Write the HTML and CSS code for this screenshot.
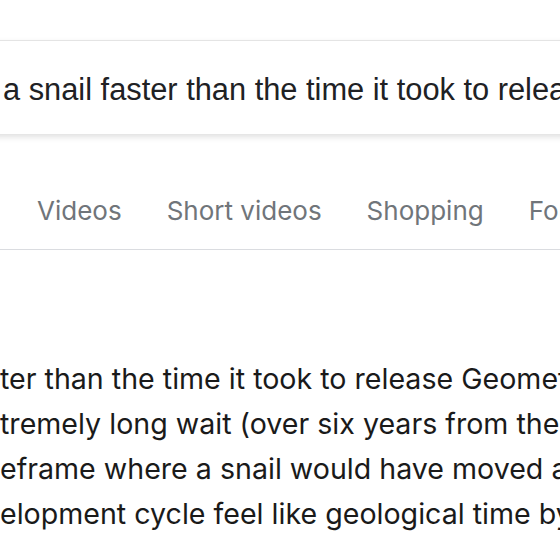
FILE: index.html
```html
<!DOCTYPE html>
<html lang="en">
<head>
<meta charset="utf-8">
<link rel="stylesheet" href="styles.css">
</head>
<body>
<div class="page">
  <header class="header">
    <div class="searchbox">
      <span class="query">a snail faster than the time it took to release Geometry Dash 2.2</span>
    </div>
  </header>
  <nav class="tabs">
    <span class="tab tab-first">Videos</span>
    <span class="tab">Short videos</span>
    <span class="tab">Shopping</span>
    <span class="tab">Forums</span>
  </nav>
  <main class="answer">
    <p class="line">ter than the time it took to release Geometry Dash 2.2</p>
    <p class="line">tremely long wait (over six years from the previous update)</p>
    <p class="line">eframe where a snail would have moved across a great distance</p>
    <p class="line">elopment cycle feel like geological time by comparison</p>
  </main>
</div>
</body>
</html>
```
FILE: styles.css
```css
html, body {
  margin: 0;
  padding: 0;
  background: #fff;
  overflow: hidden;
}
.page {
  width: 560px;
  height: 560px;
  overflow: hidden;
  font-family: Inter, Roboto, sans-serif;
}
.header {
  padding-top: 40px;
  height: 110px;
  box-sizing: border-box;
}
.searchbox {
  margin-left: -40px;
  width: 700px;
  height: 94px;
  box-sizing: border-box;
  background: #fff;
  border-top: 1px solid #e4e4e4;
  box-shadow: 0 3px 6px rgba(32, 33, 36, 0.14);
  display: flex;
  align-items: center;
  padding-left: 43px;
  white-space: nowrap;
  overflow: hidden;
}
.query {
  font-family: "Liberation Sans", Arial, sans-serif;
  font-size: 30.8px;
  color: #202124;
  margin-top: 4px;
}
.tabs {
  margin-top: 65px;
  height: 75px;
  box-sizing: border-box;
  border-bottom: 1px solid #dadce0;
  display: flex;
  align-items: center;
  gap: 45px;
  white-space: nowrap;
  padding-left: 37px;
  padding-bottom: 3px;
}
.tab {
  font-size: 26px;
  color: #70757a;
}
.answer {
  padding-top: 106px;
}
.line {
  margin: 0;
  font-size: 28.6px;
  line-height: 45px;
  color: #1a1a1a;
  white-space: nowrap;
}
```
